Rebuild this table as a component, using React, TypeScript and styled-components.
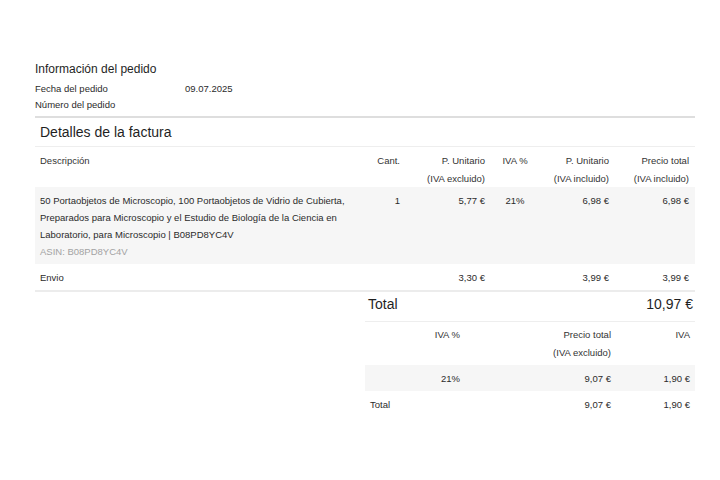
import styled, { createGlobalStyle, css } from "styled-components";

const GlobalStyle = createGlobalStyle`
  body {
    margin: 0;
    background: #ffffff;
    font-family: "Liberation Sans", Arial, sans-serif;
    color: #2b2b2b;
  }
`;

type Align = "left" | "right" | "center";

type Item = {
  lines: string[];
  asin?: string;
  qty?: string;
  unitExcl: string;
  vat?: string;
  unitIncl: string;
  total: string;
  shaded?: boolean;
  divider?: boolean;
};

const items: Item[] = [
  {
    lines: [
      "50 Portaobjetos de Microscopio, 100 Portaobjetos de Vidrio de Cubierta,",
      "Preparados para Microscopio y el Estudio de Biología de la Ciencia en",
      "Laboratorio, para Microscopio | B08PD8YC4V",
    ],
    asin: "ASIN: B08PD8YC4V",
    qty: "1",
    unitExcl: "5,77 €",
    vat: "21%",
    unitIncl: "6,98 €",
    total: "6,98 €",
    shaded: true,
  },
  {
    lines: ["Envio"],
    unitExcl: "3,30 €",
    unitIncl: "3,99 €",
    total: "3,99 €",
    divider: true,
  },
];

export default function App() {
  return (
    <>
      <GlobalStyle />
      <Page>
        <OrderTitle>Información del pedido</OrderTitle>
        <InfoGrid>
          <span>Fecha del pedido</span>
          <span>09.07.2025</span>
          <span>Número del pedido</span>
          <span></span>
        </InfoGrid>

        <SectionTitle>Detalles de la factura</SectionTitle>

        <Table>
          <colgroup>
            <col style={{ width: 330 }} />
            <col style={{ width: 40 }} />
            <col style={{ width: 85 }} />
            <col style={{ width: 50 }} />
            <col style={{ width: 74 }} />
            <col style={{ width: 81 }} />
          </colgroup>
          <thead>
            <tr>
              <HeadCell>Descripción</HeadCell>
              <HeadCell align="right">Cant.</HeadCell>
              <HeadCell align="right">
                P. Unitario<br />(IVA excluido)
              </HeadCell>
              <HeadCell align="center">IVA %</HeadCell>
              <HeadCell align="right">
                P. Unitario<br />(IVA incluido)
              </HeadCell>
              <HeadCell align="right" last>
                Precio total<br />(IVA incluido)
              </HeadCell>
            </tr>
          </thead>
          <tbody>
            {items.map((it, i) => (
              <ItemRow key={i} shaded={it.shaded} divider={it.divider}>
                <Cell>
                  {it.lines.map((l) => (
                    <div key={l}>{l}</div>
                  ))}
                  {it.asin && <Asin>{it.asin}</Asin>}
                </Cell>
                <Cell align="right">{it.qty}</Cell>
                <Cell align="right">{it.unitExcl}</Cell>
                <Cell align="center">{it.vat}</Cell>
                <Cell align="right">{it.unitIncl}</Cell>
                <Cell align="right" last>
                  {it.total}
                </Cell>
              </ItemRow>
            ))}
          </tbody>
        </Table>

        <Summary>
          <GrandTotal>
            <span>Total</span>
            <span>10,97 €</span>
          </GrandTotal>
          <SummaryTable>
            <colgroup>
              <col style={{ width: 35 }} />
              <col style={{ width: 65 }} />
              <col style={{ width: 151 }} />
              <col style={{ width: 79 }} />
            </colgroup>
            <thead>
              <tr>
                <HeadCell />
                <HeadCell align="right">IVA %</HeadCell>
                <HeadCell align="right">
                  Precio total<br />(IVA excluido)
                </HeadCell>
                <HeadCell align="right">IVA</HeadCell>
              </tr>
            </thead>
            <tbody>
              <ItemRow shaded>
                <Cell />
                <Cell align="right">21%</Cell>
                <Cell align="right">9,07 €</Cell>
                <Cell align="right">1,90 €</Cell>
              </ItemRow>
              <ItemRow>
                <Cell>Total</Cell>
                <Cell />
                <Cell align="right">9,07 €</Cell>
                <Cell align="right">1,90 €</Cell>
              </ItemRow>
            </tbody>
          </SummaryTable>
        </Summary>
      </Page>
    </>
  );
}

const Page = styled.div`
  width: 660px;
  margin-left: 35px;
  padding-top: 61px;
`;

const OrderTitle = styled.h2`
  margin: 0 0 4px;
  font-size: 12px;
  font-weight: 400;
  line-height: 16px;
  color: #1f1f1f;
`;

const InfoGrid = styled.div`
  display: grid;
  grid-template-columns: 150px 1fr;
  font-size: 9.5px;
  line-height: 16px;
  padding-bottom: 3px;
  border-bottom: 2px solid #dedede;
`;

const SectionTitle = styled.h3`
  margin: 0;
  padding: 6px 5px 5px;
  font-size: 14px;
  font-weight: 400;
  line-height: 17px;
  color: #1f1f1f;
  border-bottom: 1px solid #eeeeee;
`;

const Table = styled.table`
  width: 100%;
  table-layout: fixed;
  border-collapse: collapse;
  font-size: 9.5px;
`;

const SummaryTable = styled(Table)`
  th {
    padding-top: 4px;
    padding-bottom: 4px;
  }
`;

type CellProps = { align?: Align; last?: boolean };

const cellBase = css<CellProps>`
  text-align: ${(p) => p.align || "left"};
  vertical-align: top;
  padding-left: 5px;
  padding-right: ${(p) => (p.last ? 6 : 5)}px;
  white-space: nowrap;
`;

const HeadCell = styled.th<CellProps>`
  ${cellBase};
  font-weight: 400;
  line-height: 17.5px;
  padding-top: 5px;
  padding-bottom: 0;
  color: #333333;
`;

const ItemRow = styled.tr<{ shaded?: boolean; divider?: boolean }>`
  background: ${(p) => (p.shaded ? "#f6f6f6" : "transparent")};
  border-bottom: ${(p) => (p.divider ? "2px solid #ececec" : "none")};
`;

const Cell = styled.td<CellProps>`
  ${cellBase};
  line-height: 17px;
  padding-top: 4.5px;
  padding-bottom: 4.5px;
`;

const Asin = styled.div`
  color: #a3a3a3;
`;

const Summary = styled.div`
  width: 330px;
  margin-left: auto;
`;

const GrandTotal = styled.div`
  display: flex;
  justify-content: space-between;
  font-size: 14px;
  line-height: 17px;
  padding: 4px 2px 8px 3px;
  color: #1f1f1f;
  border-bottom: 1px solid #eeeeee;
`;
